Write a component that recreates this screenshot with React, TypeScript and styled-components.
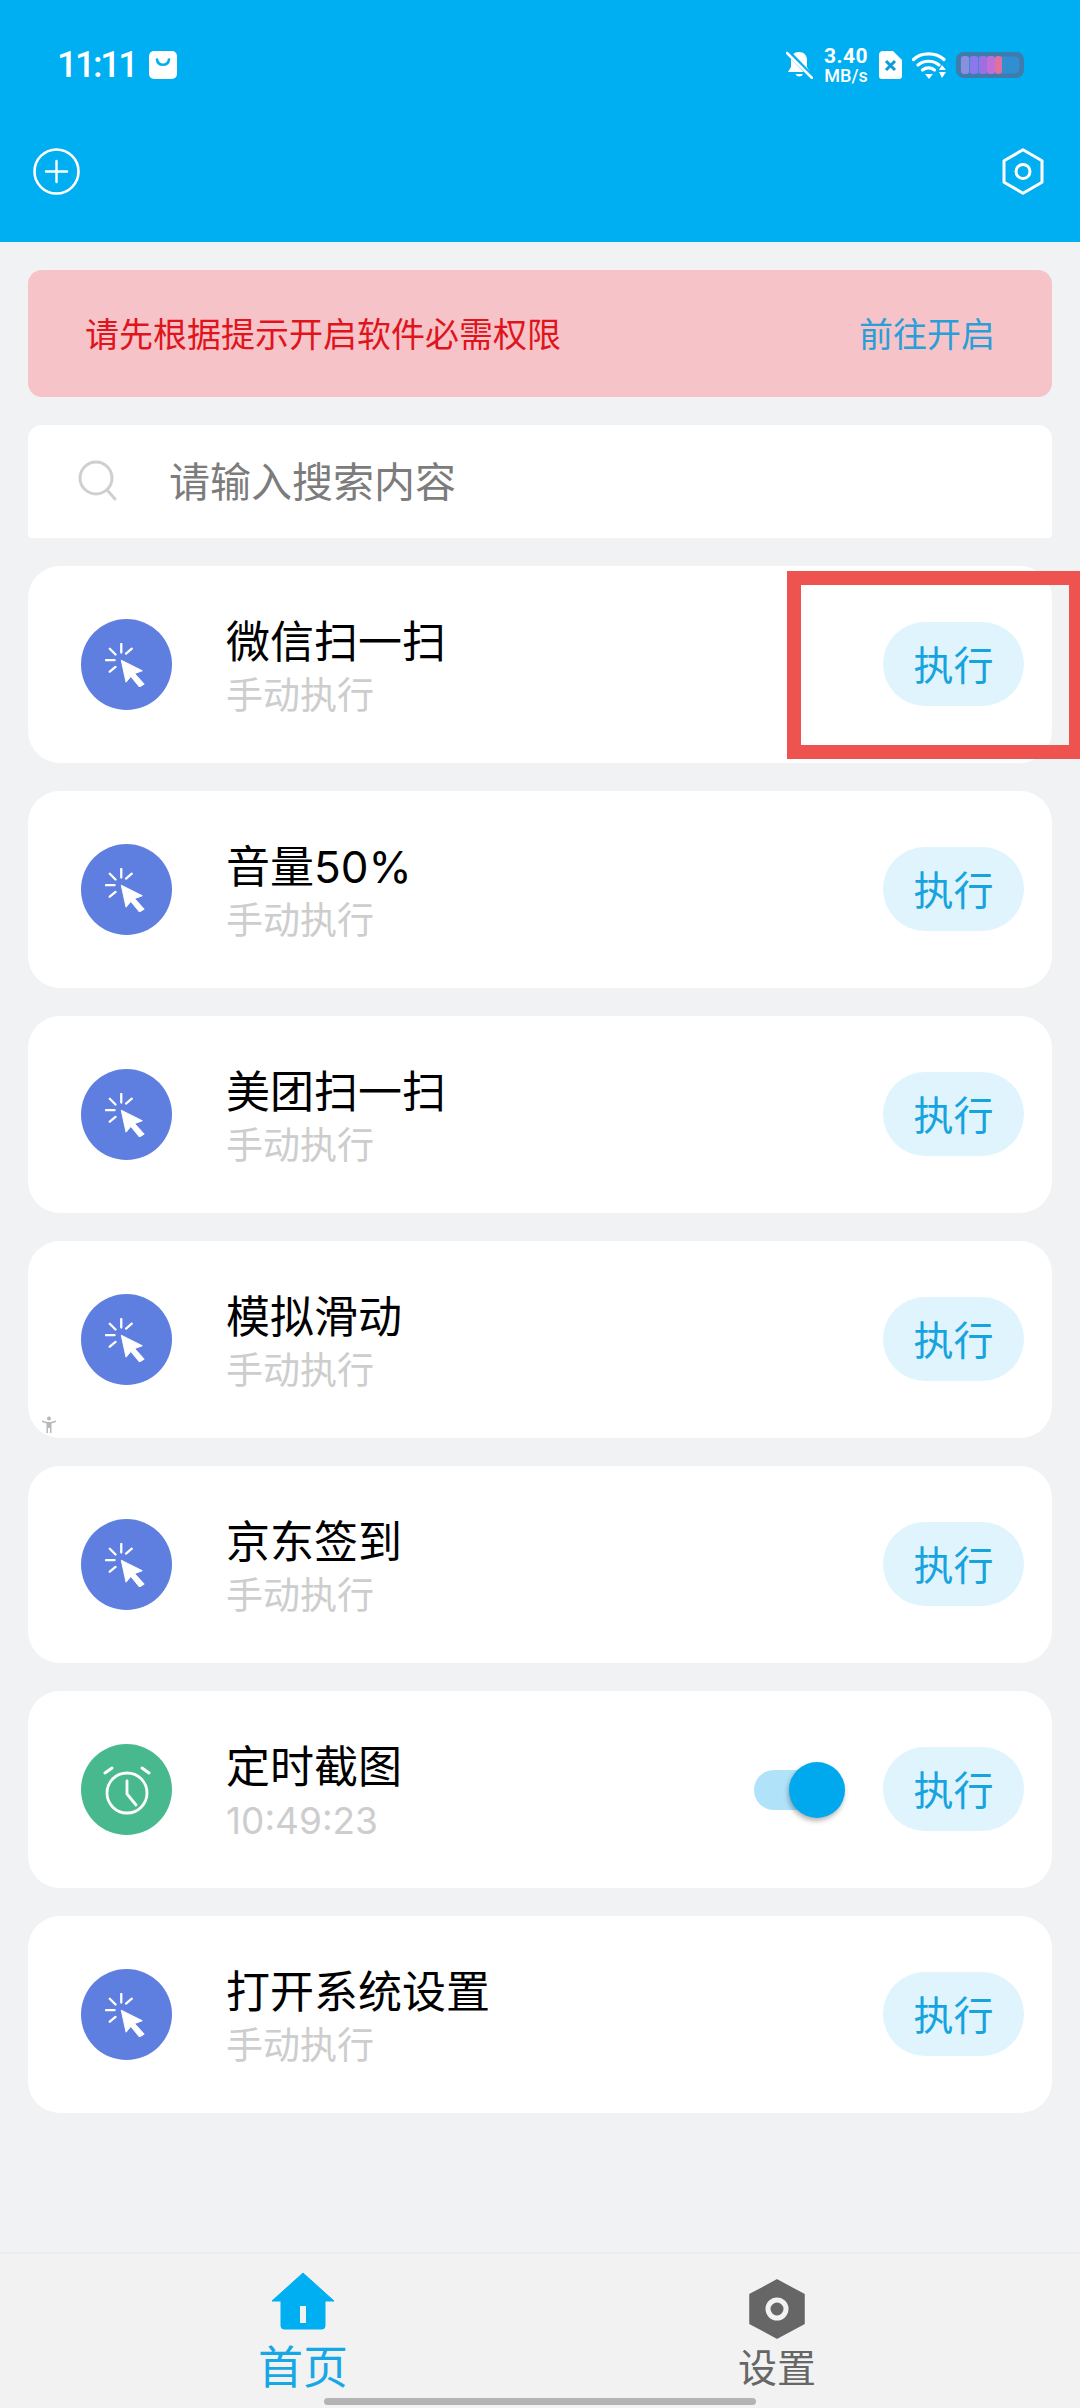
import React from "react";
import styled, { createGlobalStyle } from "styled-components";

const Global = createGlobalStyle`
  html, body { margin: 0; padding: 0; background: #f1f2f4; }
  * { box-sizing: border-box; }
  body { font-family: "Noto Sans CJK SC", Roboto, sans-serif; }
`;

const Page = styled.div`
  position: relative;
  width: 1080px;
  height: 2408px;
  overflow: hidden;
  display: flex;
  flex-direction: column;
  background: #f1f2f4;
`;

const Header = styled.header`
  height: 242px;
  background: #00aef2;
  padding: 47px 36px 0 33px;
  color: #fff;
`;

const StatusBar = styled.div`
  height: 36px;
  display: flex;
  align-items: center;
  justify-content: space-between;
  padding-left: 24px;
`;

const StatusLeft = styled.div`
  display: flex;
  align-items: center;
  gap: 13px;
`;

const Clock = styled.span`
  font-family: Roboto, sans-serif;
  font-size: 36px;
  font-weight: 500;
  line-height: 36px;
  letter-spacing: -2.4px;
`;

const StatusRight = styled.div`
  display: flex;
  align-items: center;
  gap: 10px;
  margin-right: 20px;
`;

const Speed = styled.div`
  display: flex;
  flex-direction: column;
  align-items: center;
  width: 46px;
  font-family: Roboto, sans-serif;
  font-weight: 700;
  color: #fff;
`;

const SpeedValue = styled.span`
  font-size: 21px;
  line-height: 22px;
  letter-spacing: 0.4px;
`;

const SpeedUnit = styled.span`
  font-size: 18px;
  line-height: 18px;
  font-weight: 500;
`;

const Toolbar = styled.div`
  margin-top: 65px;
  height: 47px;
  display: flex;
  align-items: center;
  justify-content: space-between;
`;

const Content = styled.main`
  flex: 1;
  padding: 28px 28px 0;
  display: flex;
  flex-direction: column;
`;

const Alert = styled.div`
  height: 127px;
  border-radius: 14px;
  background: #f5c3c8;
  display: flex;
  align-items: center;
  justify-content: space-between;
  padding: 0 57px 2px 57px;
  font-size: 34px;
`;

const AlertText = styled.span`
  color: #e0141c;
`;

const AlertLink = styled.span`
  color: #2a9ed8;
`;

const Search = styled.div`
  margin-top: 28px;
  height: 113px;
  background: #fff;
  border-radius: 14px 14px 4px 4px;
  display: flex;
  align-items: center;
  padding-left: 50px;
  font-size: 41px;
  color: #7c7c7c;
`;

const SearchHint = styled.span`
  margin-left: 50px;
  position: relative;
  top: -3px;
`;

const Cards = styled.div`
  margin-top: 28px;
  display: flex;
  flex-direction: column;
  gap: 28px;
`;

const Card = styled.div`
  height: 197px;
  background: #fff;
  border-radius: 32px;
  display: flex;
  align-items: center;
  padding: 0 28px 0 53px;
`;

const IconCircle = styled.div<{ $color: string }>`
  width: 91px;
  height: 91px;
  border-radius: 50%;
  background: ${(p) => p.$color};
  display: flex;
  align-items: center;
  justify-content: center;
  flex-shrink: 0;
`;

const CardText = styled.div`
  flex: 1;
  margin-left: 54px;
  padding-top: 6px;
  display: flex;
  flex-direction: column;
`;

const Title = styled.div`
  font-family: Inter, "Noto Sans CJK SC", sans-serif;
  font-size: 44px;
  line-height: 56px;
  color: #000;
`;

const Sub = styled.div`
  font-family: Inter, "Noto Sans CJK SC", sans-serif;
  font-size: 37px;
  line-height: 50px;
  margin-top: 1px;
  color: #cdcdcd;
`;

const Toggle = styled.div`
  position: relative;
  width: 62px;
  height: 40px;
  margin-right: 67px;
  border-radius: 20px;
  background: #b0e3fa;
`;

const Thumb = styled.div`
  position: absolute;
  left: 35px;
  top: -8px;
  width: 56px;
  height: 56px;
  border-radius: 50%;
  background: #00a9ee;
  box-shadow: -1px 3px 5px rgba(0, 0, 0, 0.3);
`;

const RunButton = styled.div`
  width: 141px;
  height: 84px;
  margin-bottom: 1px;
  padding-bottom: 3px;
  border-radius: 42px;
  background: #dff4fd;
  color: #16a3de;
  font-size: 40px;
  display: flex;
  align-items: center;
  justify-content: center;
`;

const Nav = styled.nav`
  height: 156px;
  background: #f2f2f3;
  border-top: 2px solid #ececee;
  display: grid;
  grid-template-columns: 606px 342px;
`;

const NavItem = styled.div<{ $active?: boolean; $pad: number; $size: number; $gap: number }>`
  display: flex;
  flex-direction: column;
  align-items: center;
  padding-top: ${(p) => p.$pad}px;
  gap: ${(p) => p.$gap}px;
  font-size: ${(p) => p.$size}px;
  line-height: ${(p) => p.$size + 2}px;
  color: ${(p) => (p.$active ? "#16a8e4" : "#666666")};
`;

const HomeBar = styled.div`
  position: absolute;
  left: 324px;
  top: 2398px;
  width: 432px;
  height: 7px;
  border-radius: 4px;
  background: #b4b4b4;
`;

const Highlight = styled.div`
  position: absolute;
  left: 787px;
  top: 571px;
  width: 296px;
  height: 188px;
  border: 14px solid #ef5350;
`;

const Floating = styled.div`
  position: absolute;
  left: 42px;
  top: 1416px;
  line-height: 0;
`;

const BagIcon = () => (
  <svg width="28" height="28" viewBox="0 0 28 28">
    <rect width="28" height="28" rx="5" fill="#fff" />
    <path d="M8 8.5c1 7 11 7 12 0" fill="none" stroke="#00aef2" strokeWidth="2.6" strokeLinecap="round" />
  </svg>
);

const BellIcon = () => (
  <svg width="27" height="28" viewBox="0 0 27 28">
    <path d="M13 1c-5 0-8 3.500-8 8v7l-3 5h22l-3-5V9c0-4.500-3-8-8-8z" fill="#fff" />
    <path d="M9.500 23a4 4 0 0 0 7.500 0z" fill="#fff" />
    <path d="M1 0l25 26" stroke="#00aef2" strokeWidth="5" />
    <path d="M1 2l25 25" stroke="#fff" strokeWidth="2.500" strokeLinecap="round" />
  </svg>
);

const SimIcon = () => (
  <svg width="23" height="28" viewBox="0 0 23 28">
    <path d="M4 0h10l9 9v16a3 3 0 0 1-3 3H3a3 3 0 0 1-3-3V4a4 4 0 0 1 4-4z" fill="#fff" />
    <path d="M7 10l9 9M16 10l-9 9" stroke="#0a9bd8" strokeWidth="3" />
  </svg>
);

const WifiIcon = () => (
  <svg width="34" height="28" viewBox="0 0 34 28">
    <g fill="none" stroke="#fff" strokeWidth="3.200" strokeLinecap="round">
      <path d="M1.500 8.500C9 1 24 1 32 8.500" />
      <path d="M6 14c6-5 15-5 21 0" />
      <path d="M10.500 19c3.500-2.800 8.500-2.800 12 0" />
    </g>
    <path d="M13 23h8l-4 5z" fill="#fff" />
    <path d="M30 14l4 5h-7zM30 27l4-6h-7z" fill="#fff" />
  </svg>
);

const BatteryIcon = () => (
  <svg width="68" height="26" viewBox="0 0 68 26">
    <rect width="68" height="26" rx="8" fill="#3f7bad" />
    <rect x="4.500" y="4.500" width="59" height="17" rx="5" fill="#2f8fd0" />
    <rect x="5" y="4" width="8" height="18" rx="3" fill="#8d8fdc" />
    <rect x="14" y="4" width="8" height="18" rx="3" fill="#8d77ec" />
    <rect x="23" y="4" width="8" height="18" rx="3" fill="#a06ee0" />
    <rect x="31" y="4" width="8" height="18" rx="3" fill="#c070d4" />
    <rect x="39" y="4" width="7" height="18" rx="3" fill="#e2709f" />
  </svg>
);

const PlusIcon = () => (
  <svg width="47" height="47" viewBox="0 0 47 47" fill="none" stroke="#fff">
    <circle cx="23.500" cy="23.500" r="22" strokeWidth="2.600" />
    <path d="M13 23.500h21M23.500 13v21" strokeWidth="2.400" strokeLinecap="round" />
  </svg>
);

const HexOutline = () => (
  <svg width="42" height="47" viewBox="0 0 42 47" fill="none" stroke="#fff" strokeWidth="3" strokeLinejoin="round">
    <path d="M21 1.800L40 12.700v21.600L21 45.200 2 34.300V12.700z" />
    <circle cx="21" cy="23.500" r="7" />
  </svg>
);

const SearchIcon = () => (
  <svg width="41" height="45" viewBox="0 0 41 45" fill="none" stroke="#cfcfcf" strokeWidth="3" strokeLinecap="round">
    <circle cx="18" cy="19" r="16" />
    <path d="M30 32l7 8" />
  </svg>
);

const CursorIcon = () => (
  <svg width="44" height="44" viewBox="0 0 46 46">
    <g stroke="#fff" strokeWidth="2.400" strokeLinecap="round">
      <path d="M17 1v9M5 6l6 6M28 6l-6 5M1 18h9M5 30l6-5" />
    </g>
    <path d="M17 18l22 11-8 3 10 11-5 3-9-11-5 6z" fill="#fff" strokeLinejoin="round" stroke="#fff" strokeWidth="1" />
  </svg>
);

const AlarmIcon = () => (
  <svg width="48" height="50" viewBox="0 0 48 50" fill="none" stroke="#fff" strokeLinecap="round">
    <circle cx="24" cy="28" r="20" strokeWidth="2.800" />
    <path d="M24 16v13l9 11" strokeWidth="2.800" />
    <path d="M2 8l7-5M46 8l-7-5" strokeWidth="3" />
  </svg>
);

const HomeIcon = () => (
  <svg width="62" height="57" viewBox="0 0 62 57">
    <path
      d="M31 0L62 28H53V53a3 3 0 0 1-3 3H12a3 3 0 0 1-3-3V28H0z"
      fill="#00aef2"
      stroke="#00aef2"
      strokeLinejoin="round"
    />
    <rect x="28" y="33" width="6" height="17" fill="#f2f2f3" />
  </svg>
);

const HexFilled = () => (
  <svg width="56" height="60" viewBox="0 0 56 60">
    <path d="M28 1L55 15.500v29L28 59 1 44.500v-29z" fill="#666" stroke="#666" strokeWidth="1.500" strokeLinejoin="round" />
    <circle cx="28" cy="30" r="9" fill="none" stroke="#f2f2f3" strokeWidth="5" />
  </svg>
);

const AccessIcon = () => (
  <svg width="14" height="18" viewBox="0 0 14 18" fill="#b8b8b8">
    <circle cx="7" cy="2.500" r="2" />
    <path d="M0 4.500l5 1.500h4l5-1.500v1.500l-4.500 1.500V17H8v-5H6v5H4.500V7.500L0 6z" />
  </svg>
);

type Item = { title: string; sub: string; timer?: boolean };

const items: Item[] = [
  { title: "微信扫一扫", sub: "手动执行" },
  { title: "音量50%", sub: "手动执行" },
  { title: "美团扫一扫", sub: "手动执行" },
  { title: "模拟滑动", sub: "手动执行" },
  { title: "京东签到", sub: "手动执行" },
  { title: "定时截图", sub: "10:49:23", timer: true },
  { title: "打开系统设置", sub: "手动执行" },
];

export default function App() {
  return (
    <Page>
      <Global />
      <Header>
        <StatusBar>
          <StatusLeft>
            <Clock>11:11</Clock>
            <BagIcon />
          </StatusLeft>
          <StatusRight>
            <BellIcon />
            <Speed>
              <SpeedValue>3.40</SpeedValue>
              <SpeedUnit>MB/s</SpeedUnit>
            </Speed>
            <SimIcon />
            <WifiIcon />
            <BatteryIcon />
          </StatusRight>
        </StatusBar>
        <Toolbar>
          <PlusIcon />
          <HexOutline />
        </Toolbar>
      </Header>
      <Content>
        <Alert>
          <AlertText>请先根据提示开启软件必需权限</AlertText>
          <AlertLink>前往开启</AlertLink>
        </Alert>
        <Search>
          <SearchIcon />
          <SearchHint>请输入搜索内容</SearchHint>
        </Search>
        <Cards>
          {items.map((it) => (
            <Card key={it.title}>
              <IconCircle $color={it.timer ? "#48b98e" : "#5f7fe0"}>
                {it.timer ? <AlarmIcon /> : <CursorIcon />}
              </IconCircle>
              <CardText>
                <Title>{it.title}</Title>
                <Sub>{it.sub}</Sub>
              </CardText>
              {it.timer && (
                <Toggle>
                  <Thumb />
                </Toggle>
              )}
              <RunButton>执行</RunButton>
            </Card>
          ))}
        </Cards>
      </Content>
      <Nav>
        <NavItem $active $pad={19} $size={45} $gap={11}>
          <HomeIcon />
          <span>首页</span>
        </NavItem>
        <NavItem $pad={25} $size={39} $gap={6}>
          <HexFilled />
          <span>设置</span>
        </NavItem>
      </Nav>
      <Highlight />
      <Floating>
        <AccessIcon />
      </Floating>
      <HomeBar />
    </Page>
  );
}
